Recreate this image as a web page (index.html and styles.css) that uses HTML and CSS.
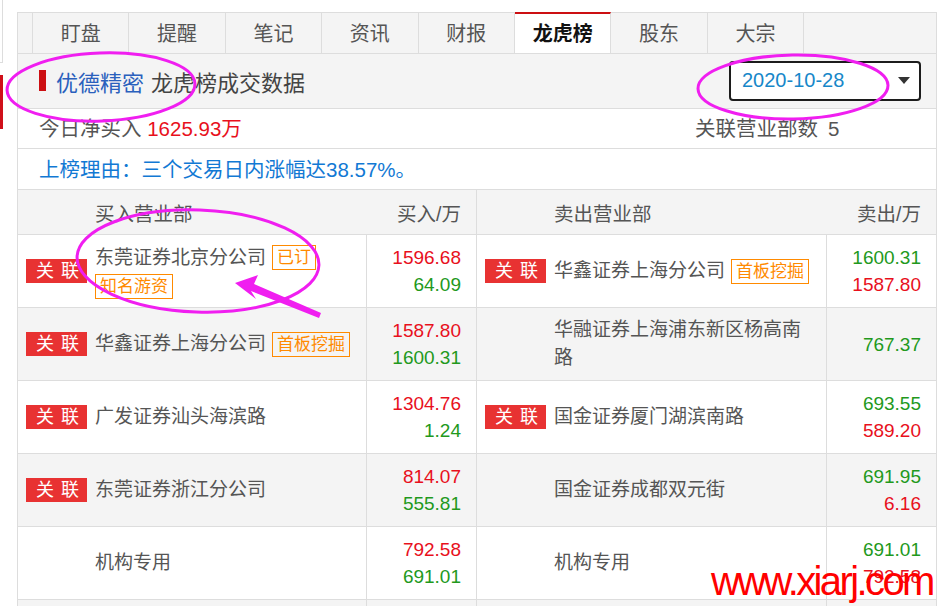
FILE: index.html
```html
<!doctype html>
<html>

<head>
  <meta charset="UTF-8" />
  <link rel="stylesheet" href="styles.css">
</head>

<body>
  <div class="page">
    <div class="side">
      <div class="side-box"></div>
      <div class="side-mark"></div>
    </div>

    <div class="panel">
      <div class="tabs">
        <div class="tab tab-lead"></div>
        <div class="tab">盯盘</div>
        <div class="tab">提醒</div>
        <div class="tab">笔记</div>
        <div class="tab">资讯</div>
        <div class="tab">财报</div>
        <div class="tab active">龙虎榜</div>
        <div class="tab">股东</div>
        <div class="tab">大宗</div>
        <div class="tab-fill"></div>
      </div>

      <div class="title-bar">
        <span class="title-mark"></span>
        <span class="title-stock">优德精密</span>
        <span class="title-text">龙虎榜成交数据</span>
        <div class="date-select">
          <span>2020-10-28</span>
          <i class="caret"></i>
        </div>
      </div>

      <div class="summary">
        <div>今日净买入 <span class="up">1625.93万</span></div>
        <div>关联营业部数<span class="count">5</span></div>
      </div>

      <div class="reason">上榜理由：三个交易日内涨幅达38.57%。</div>

      <div class="deals">
        <div class="deals-head">
          <div class="head-name">买入营业部</div>
          <div class="head-amount split">买入/万</div>
          <div class="head-name">卖出营业部</div>
          <div class="head-amount">卖出/万</div>
        </div>

        <div class="deal-row">
          <div class="broker">
            <span class="badge">关联</span>
            <div class="broker-name"><span>东莞证券北京分公司</span><span class="tag">已订</span><span class="tag">知名游资</span></div>
          </div>
          <div class="amount split"><span class="up">1596.68</span><span class="down">64.09</span></div>
          <div class="broker">
            <span class="badge">关联</span>
            <div class="broker-name"><span>华鑫证券上海分公司</span><span class="tag">首板挖掘</span></div>
          </div>
          <div class="amount"><span class="down">1600.31</span><span class="up">1587.80</span></div>
        </div>

        <div class="deal-row alt">
          <div class="broker">
            <span class="badge">关联</span>
            <div class="broker-name"><span>华鑫证券上海分公司</span><span class="tag">首板挖掘</span></div>
          </div>
          <div class="amount split"><span class="up">1587.80</span><span class="down">1600.31</span></div>
          <div class="broker">
            <span class="badge none"></span>
            <div class="broker-name"><span>华融证券上海浦东新区杨高南路</span></div>
          </div>
          <div class="amount"><span class="down">767.37</span></div>
        </div>

        <div class="deal-row">
          <div class="broker">
            <span class="badge">关联</span>
            <div class="broker-name"><span>广发证券汕头海滨路</span></div>
          </div>
          <div class="amount split"><span class="up">1304.76</span><span class="down">1.24</span></div>
          <div class="broker">
            <span class="badge">关联</span>
            <div class="broker-name"><span>国金证券厦门湖滨南路</span></div>
          </div>
          <div class="amount"><span class="down">693.55</span><span class="up">589.20</span></div>
        </div>

        <div class="deal-row alt">
          <div class="broker">
            <span class="badge">关联</span>
            <div class="broker-name"><span>东莞证券浙江分公司</span></div>
          </div>
          <div class="amount split"><span class="up">814.07</span><span class="down">555.81</span></div>
          <div class="broker">
            <span class="badge none"></span>
            <div class="broker-name"><span>国金证券成都双元街</span></div>
          </div>
          <div class="amount"><span class="down">691.95</span><span class="up">6.16</span></div>
        </div>

        <div class="deal-row">
          <div class="broker">
            <span class="badge none"></span>
            <div class="broker-name"><span>机构专用</span></div>
          </div>
          <div class="amount split"><span class="up">792.58</span><span class="down">691.01</span></div>
          <div class="broker">
            <span class="badge none"></span>
            <div class="broker-name"><span>机构专用</span></div>
          </div>
          <div class="amount"><span class="down">691.01</span><span class="up">792.58</span></div>
        </div>

        <div class="deal-row alt">
          <div class="broker"></div>
          <div class="amount split"></div>
          <div class="broker"></div>
          <div class="amount"></div>
        </div>
      </div>
    </div>
  </div>

  <!-- hand-drawn annotations over the screenshot -->
  <svg class="marks" viewBox="0 0 941 606" xmlns="http://www.w3.org/2000/svg">
    <ellipse cx="101" cy="87" rx="94" ry="34" transform="rotate(-2 101 87)" />
    <ellipse cx="793" cy="87" rx="95" ry="32" transform="rotate(-1 793 87)" />
    <ellipse cx="198" cy="261" rx="121" ry="51" transform="rotate(2 198 261)" />
    <path class="arrow" d="M235,283 L258,275 L254,284 L321,313 L319,318 L251,291 L256,299 Z" />
  </svg>

  <div class="watermark">www.xiarj.com</div>
</body>

</html>
```

FILE: styles.css
```css
body {
  margin: 0;
  padding: 0;
  background-color: #FFFFFF;
  font-family: "Liberation Sans", "Noto Sans CJK SC", sans-serif;
  color: #555555;
  overflow: hidden;
}

.page {
  display: flex;
  align-items: flex-start;
}

.side {
  width: 17px;
  flex: none;
}

.side-box {
  width: 2px;
  height: 62px;
  border-right: 1px solid #dddddd;
  border-bottom: 1px solid #dddddd;
}

.side-mark {
  margin-top: 12px;
  width: 3px;
  height: 54px;
  background-color: #d0101a;
}

.panel {
  width: 920px;
  margin-top: 12px;
  box-sizing: border-box;
  border-left: 1px solid #dddddd;
  border-right: 1px solid #dddddd;
}

/* tabs */

.tabs {
  display: flex;
  height: 42px;
  box-sizing: border-box;
  border-bottom: 1px solid #dddddd;
  background-color: #f4f4f4;
}

.tab {
  width: 96.4px;
  box-sizing: border-box;
  border-top: 1px solid #dddddd;
  border-right: 1px solid #dddddd;
  display: flex;
  align-items: center;
  justify-content: center;
  padding-bottom: 2px;
  font-size: 20px;
  color: #555555;
}

.tab-lead {
  width: 15px;
}

.tab.active {
  background-color: #FFFFFF;
  border-top: 2px solid #cc0f12;
  color: #111111;
  font-weight: 700;
  padding-bottom: 3px;
}

.tab-fill {
  flex: 1;
  border-top: 1px solid #dddddd;
}

/* title */

.title-bar {
  display: flex;
  align-items: center;
  height: 55px;
  box-sizing: border-box;
  padding: 0 15px 1px 21px;
  background-color: #f4f4f4;
  border-bottom: 1px solid #dddddd;
  font-size: 22px;
}

.title-mark {
  width: 7px;
  height: 21px;
  background-color: #cc0f12;
  margin-right: 10px;
}

.title-stock {
  color: #2a60bd;
  margin-right: 7px;
}

.title-text {
  color: #444444;
}

.date-select {
  margin-left: auto;
  width: 192px;
  height: 40px;
  box-sizing: border-box;
  border: 2px solid #1c1c1c;
  border-radius: 4px;
  background-color: #FFFFFF;
  display: flex;
  align-items: center;
  justify-content: space-between;
  padding: 0 9px 0 11px;
  font-size: 20px;
  color: #1787c9;
}

.caret {
  width: 0;
  height: 0;
  border-left: 6.5px solid transparent;
  border-right: 6.5px solid transparent;
  border-top: 7px solid #333333;
}

/* summary */

.summary {
  display: grid;
  grid-template-columns: 656px 1fr;
  align-items: center;
  height: 40px;
  box-sizing: border-box;
  padding: 0 0 3px 21px;
  border-bottom: 1px solid #dddddd;
  font-size: 20.5px;
}

.count {
  margin-left: 10px;
}

.reason {
  height: 41px;
  box-sizing: border-box;
  display: flex;
  align-items: center;
  padding: 0 0 2px 21px;
  border-bottom: 1px solid #dddddd;
  font-size: 20.5px;
  color: #1279d4;
}

.up {
  color: #e8101c;
}

.down {
  color: #22991c;
}

/* deals table */

.deals-head,
.deal-row {
  display: grid;
  grid-template-columns: 349px 110px 350px 109px;
  box-sizing: border-box;
  border-bottom: 1px solid #dddddd;
}

.deals-head {
  height: 45px;
  background-color: #f4f4f4;
  font-size: 19.5px;
  align-items: center;
}

.head-name {
  padding-left: 77px;
}

.head-amount {
  height: 100%;
  display: flex;
  align-items: center;
  justify-content: flex-end;
  padding-right: 15px;
  box-sizing: border-box;
}

.split {
  border-right: 1px solid #dddddd;
}

.deal-row {
  height: 73px;
  font-size: 19px;
}

.deal-row.alt {
  background-color: #f4f4f4;
}

.broker {
  display: flex;
  align-items: center;
  padding: 0 14px 0 8px;
  border-right: 1px solid #dddddd;
}

.badge {
  flex: none;
  width: 61px;
  height: 24px;
  box-sizing: border-box;
  padding-left: 10px;
  background-color: #e83232;
  color: #FFFFFF;
  font-size: 18px;
  line-height: 24px;
  letter-spacing: 7px;
}

.badge.none {
  background-color: transparent;
}

.broker-name {
  flex: 1;
  margin-left: 8px;
  display: flex;
  flex-wrap: wrap;
  align-items: center;
  column-gap: 6px;
  row-gap: 2px;
  line-height: 28px;
  color: #555555;
}

.tag {
  border: 1px solid #ff8a00;
  color: #ff8a00;
  font-size: 17px;
  line-height: 23px;
  padding: 0 4px;
}

.amount {
  display: flex;
  flex-direction: column;
  justify-content: center;
  align-items: flex-end;
  padding-right: 15px;
  line-height: 27px;
}

/* overlays */

.marks {
  position: absolute;
  top: 0;
  left: 0;
  width: 941px;
  height: 606px;
  pointer-events: none;
}

.marks ellipse {
  fill: none;
  stroke: #f01ef0;
  stroke-width: 3;
}

.marks .arrow {
  fill: #f01ef0;
}

.watermark {
  position: absolute;
  left: 711px;
  top: 561px;
  font-family: "Liberation Sans", sans-serif;
  font-size: 40px;
  line-height: 40px;
  letter-spacing: -2.6px;
  color: #ff0000;
  white-space: nowrap;
}
```
